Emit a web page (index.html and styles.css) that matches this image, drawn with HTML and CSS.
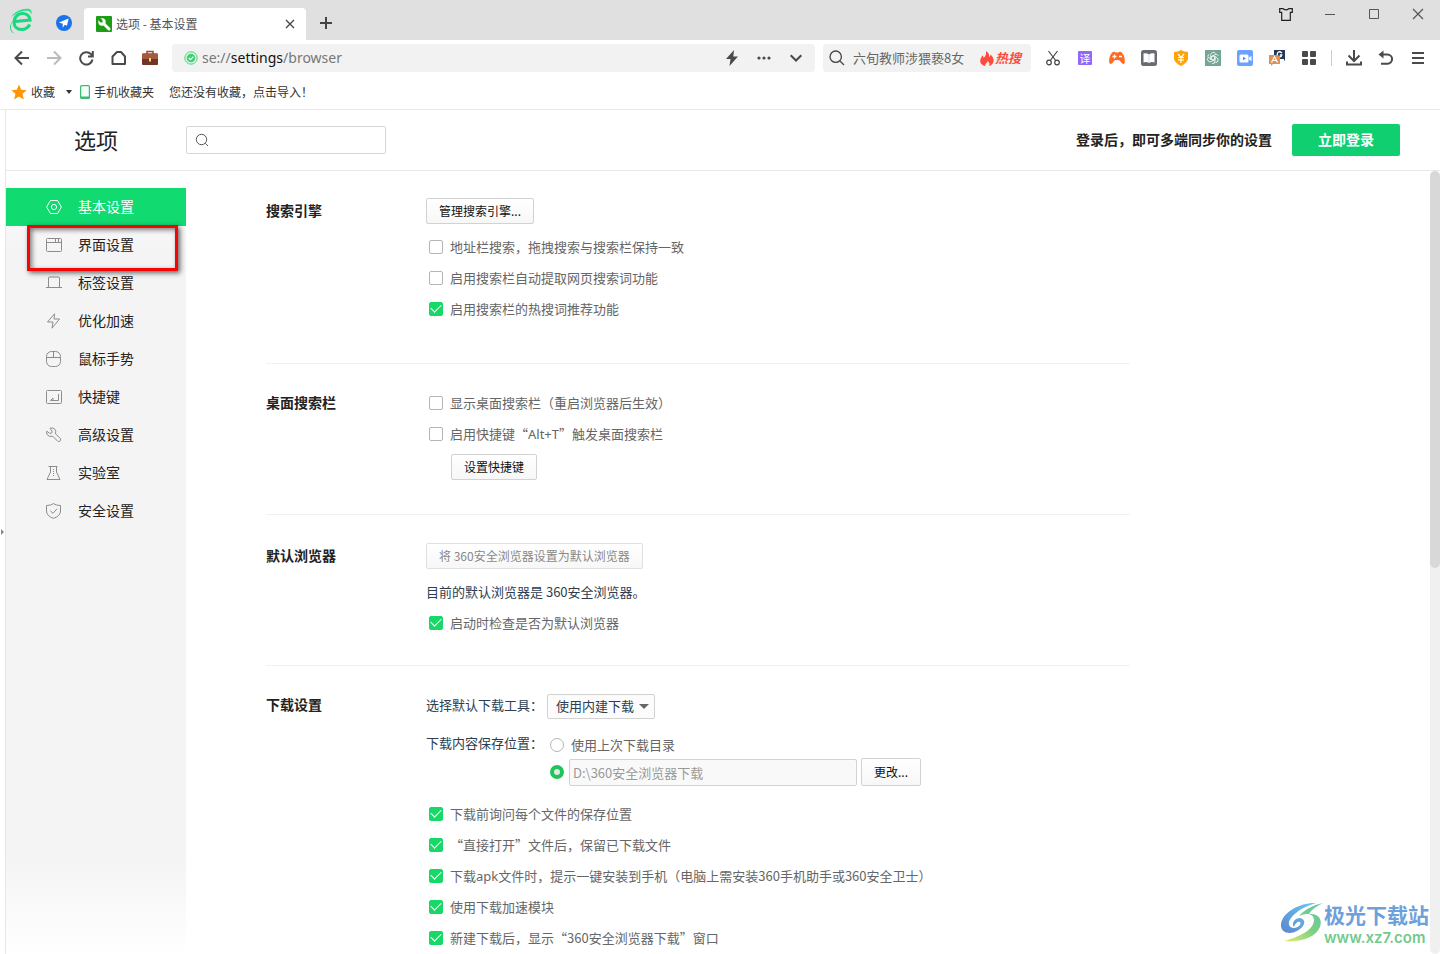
FILE: index.html
```html
<!DOCTYPE html>
<html lang="zh-CN">
<head>
<meta charset="utf-8">
<meta name="viewport" content="width=device-width, initial-scale=1">
<title>选项 - 基本设置</title>
<link rel="stylesheet" href="styles.css">
</head>
<body>
<header class="titlebar">
  <div class="brand">
    <svg width="24" height="26" viewBox="0 0 24 26"><path d="M5 13.500 20 12C19.500 8 16.500 5.500 12.500 5.500 7.500 5.500 4 9.500 4 14c0 4.500 3 7.500 7.500 7.500 3.500 0 6.500-1.700 8.300-5" fill="none" stroke="#1bd880" stroke-width="3.200"/><path d="M1 9.500C4 3.500 12 .500 18 .800c3.500.2 4.500 3 3 6 0-2.800-1.500-4-4-4C11 2.800 5.500 5.500 1 9.500z" fill="#2be08c"/><path d="M2.500 13C0 18 .5 23 4.500 25.500-.5 24-1.500 18 2.500 13z" fill="#1bd880"/></svg>
  </div>
  <svg class="nav-badge" width="16" height="16" viewBox="0 0 16 16"><circle cx="8" cy="8" r="8" fill="#1a73e8"/><path d="M12.600 3.500 3 7.600l3.700 1.200v4l2.100-3 2.200 1z" fill="#fff"/></svg>
  <div class="tab">
    <svg width="16" height="16" viewBox="0 0 16 16"><rect width="16" height="16" rx="1" fill="#1d9d16"/><path d="M6.500 6.500 13 13" stroke="#fff" stroke-width="3" stroke-linecap="round"/><circle cx="6" cy="6" r="3.700" fill="#fff"/><path d="M1.500 3 3.500 1.500 6.500 4 6.500 6.500 4.500 6.500z" fill="#1d9d16"/></svg>
    <span class="tab-title">选项 - 基本设置</span>
    <button class="bare" aria-label="关闭标签"><svg width="10" height="10" viewBox="0 0 10 10"><path d="m1 1 8 8M9 1 1 9" stroke="#444" stroke-width="1.300"/></svg></button>
  </div>
  <button class="bare new-tab" aria-label="新标签"><svg width="12" height="12" viewBox="0 0 12 12"><path d="M6 0v12M0 6h12" stroke="#444" stroke-width="2"/></svg></button>
  <div class="window-buttons">
    <button class="bare" aria-label="皮肤"><svg width="14" height="13" viewBox="0 0 14 13"><path d="M.7.700h3.500q2.800 2.400 5.600 0h3.500v3.600h-2v8H2.700v-8h-2z" fill="none" stroke="#222" stroke-width="1.200"/></svg></button>
    <button class="bare" aria-label="最小化"><svg width="12" height="12" viewBox="0 0 12 12"><path d="M1 6.500h10" stroke="#555"/></svg></button>
    <button class="bare" aria-label="最大化"><svg width="12" height="12" viewBox="0 0 12 12"><path d="M1.500 1.500h9v9h-9z" fill="none" stroke="#555"/></svg></button>
    <button class="bare" aria-label="关闭"><svg width="12" height="12" viewBox="0 0 12 12"><path d="m1 1 10 10M11 1 1 11" stroke="#555" stroke-width="1.200"/></svg></button>
  </div>
</header>

<div class="toolbar">
  <button class="tool" aria-label="后退"><svg width="16" height="16" viewBox="0 0 16 16"><path d="M15 8H2M8 1.500 1.500 8 8 14.500" class="line"/></svg></button>
  <button class="tool" aria-label="前进"><svg width="16" height="16" viewBox="0 0 16 16"><path d="M1 8h13M8 1.500 14.500 8 8 14.500" class="line faint"/></svg></button>
  <button class="tool" aria-label="刷新"><svg width="16" height="16" viewBox="0 0 16 16"><path d="M14.500 9.500A6.200 6.200 0 1 1 13 4.200L14.500 6M14.800 1v5.500H10" class="line"/></svg></button>
  <button class="tool" aria-label="主页"><svg width="16" height="16" viewBox="0 0 16 16"><path d="M2.500 14V6.500L7 2h4l4 4.500V14z" class="line" stroke-linejoin="round"/></svg></button>
  <button class="tool" aria-label="工具箱"><svg width="16" height="16" viewBox="0 0 16 16"><path d="M5 4V1.500h6V4" fill="none" stroke="#9a4a2e" stroke-width="1.500"/><rect y="3.500" width="16" height="11.500" rx="1" fill="#6f3526"/><path d="M0 4.500q0-1 1-1h14q1 0 1 1V9H0z" fill="#a7583d"/><rect x="7" y="8" width="2" height="3.500" fill="#ffd46b"/></svg></button>

  <div class="address">
    <svg width="14" height="14" viewBox="0 0 14 14"><circle cx="7" cy="7" r="6.200" fill="#dff7e6" stroke="#4fd47b"/><circle cx="7" cy="7" r="4.300" fill="#43ce70"/><path d="m4.800 7 1.700 1.700 2.900-3" fill="none" stroke="#fff" stroke-width="1.200"/></svg>
    <span class="url">se://<b>settings</b>/browser</span>
    <button class="tool" aria-label="极速模式"><svg width="12" height="16" viewBox="0 0 12 16"><path d="M8 0 0 9h4.500L3.500 16 12 6.500H7.300z" fill="#4a4a4a"/></svg></button>
    <button class="tool" aria-label="更多"><svg width="14" height="4" viewBox="0 0 14 4"><g fill="#4a4a4a"><circle cx="2" cy="2" r="1.600"/><circle cx="7" cy="2" r="1.600"/><circle cx="12" cy="2" r="1.600"/></g></svg></button>
    <button class="tool" aria-label="展开"><svg width="12" height="8" viewBox="0 0 12 8"><path d="m.7 1.200 5.300 5.300 5.300-5.300" class="line"/></svg></button>
  </div>

  <div class="quick-search">
    <svg width="16" height="16" viewBox="0 0 16 16"><circle cx="6.700" cy="6.700" r="5.700" fill="none" stroke="#444" stroke-width="1.300"/><path d="m11 11 4 4" stroke="#444" stroke-width="1.300"/></svg>
    <span class="query">六旬教师涉猥亵8女</span>
    <svg width="14" height="15" viewBox="0 0 14 15"><path d="M6 0c3 2 3.500 4 3 6 1-.5 1.500-1.500 1.700-2.500C13 6 14 8 13.500 10.500 13 13 11 14.500 9 15c1-2 .5-3.500-1.500-5C7.300 12 5 12.500 5.300 15 2.500 14.500 0 12.500.2 9.500.3 7 2 6 2.200 4.200 3.300 5 3.500 6 3.500 7 5.500 5.500 6.500 3 6 0z" fill="#ff4b3e"/></svg>
    <em class="hot">热搜</em>
  </div>

  <div class="extensions">
    <button class="tool" aria-label="截图"><svg width="14" height="16" viewBox="0 0 14 16"><g fill="none" stroke="#444" stroke-width="1.200"><path d="M2.500 1 9.700 10.500M11.500 1 4.300 10.500"/><circle cx="3" cy="12.500" r="2.300"/><circle cx="11" cy="12.500" r="2.300"/></g></svg></button>
    <button class="tool" aria-label="翻译"><span class="translate">译</span></button>
    <button class="tool" aria-label="游戏"><svg width="16" height="14" viewBox="0 0 16 14"><path d="M4 1C5.500.200 6 1.500 8 1.500S10.500.200 12 1c3 2 4 6.500 3.800 10-.1 2.500-2.300 2.500-3.600.5C11 9.500 10 9 8 9s-3 .5-4.200 2.500C2.500 13.500.300 13.500.200 11 0 7.500 1 3 4 1z" fill="#ff6a22"/><path d="M3.500 5.500h4M5.500 3.500v4M10 5.500h3" stroke="#fff" stroke-width="1.300"/></svg></button>
    <button class="tool" aria-label="阅读"><svg width="16" height="16" viewBox="0 0 16 16"><rect width="16" height="16" rx="2.500" fill="#696b73"/><path d="M2.500 3.500Q5.500 2.500 8 4.500 10.500 2.500 13.500 3.500v9Q10.500 11.500 8 13 5.500 11.500 2.500 12.500z" fill="#fff"/><path d="M8 4.500V13" stroke="#d9dadd"/></svg></button>
    <button class="tool" aria-label="优惠"><svg width="16" height="16" viewBox="0 0 16 16"><path d="M8 0q3 2 7 2v7q-1 4-7 7-6-3-7-7V2q4 0 7-2z" fill="#ffa408"/><path d="m5 4 3 3.500L11 4M5 7.500h6M5 9.800h6M8 7.500V13" fill="none" stroke="#fff" stroke-width="1.200"/></svg></button>
    <button class="tool" aria-label="智能助手"><svg width="16" height="16" viewBox="0 0 16 16"><rect width="16" height="16" fill="#74a696"/><g fill="none" stroke="#fff" stroke-width=".8"><path id="petal" d="M5.700 9.400V4.800a2.700 2.700 0 0 1 5-1.200M6 6.800l3.700-2.100a2.700 2.700 0 0 1 3.700 1.200"/><use href="#petal" transform="rotate(120 8 8)"/><use href="#petal" transform="rotate(240 8 8)"/><path d="m8 6 1.800 1v2L8 10 6.200 9V7z"/></g></svg></button>
    <button class="tool" aria-label="录屏"><svg width="16" height="16" viewBox="0 0 16 16"><rect width="16" height="16" rx="2" fill="#6ba2ff"/><rect x="2.500" y="4.500" width="9" height="8" rx="1.500" fill="#fff"/><path d="m12 7.500 2.500-1.500v5L12 9.500z" fill="#fff"/><path d="m6 6.700 3 1.800-3 1.800z" fill="#4388f7"/></svg></button>
    <button class="tool" aria-label="双语翻译"><svg width="16" height="16" viewBox="0 0 16 16"><path d="M5 0h11v10l-1 1V9H5z" fill="#233a56"/><path d="M13 3q-3-2.500-4.500 0-1 3.500 2 4 2 0 2.300-2h-2" fill="none" stroke="#fff" stroke-width="1.300"/><path d="M0 5h8l3 1v8H4l-2 2v-2H0z" fill="#df9352"/><path d="m2.500 12.500 3-6 3 6M3.700 10.500h3.600" fill="none" stroke="#fff" stroke-width="1.200"/></svg></button>
    <button class="tool" aria-label="应用"><svg width="14" height="14" viewBox="0 0 14 14"><g fill="#4a4a4a"><rect width="6" height="6" rx="1"/><rect x="8" width="6" height="6" rx="1"/><rect y="8" width="6" height="6" rx="1"/><rect x="8" y="8" width="6" height="6" rx="1"/></g></svg></button>
    <span class="divider"></span>
    <button class="tool" aria-label="下载"><svg width="16" height="16" viewBox="0 0 16 16"><path d="M8 0v11M2.500 5.500 8 11l5.500-5.500M1 11.500v3h14v-3" class="line"/></svg></button>
    <button class="tool" aria-label="撤销"><svg width="16" height="16" viewBox="0 0 16 16"><path d="M3 4.500h6.500a4.600 4.600 0 0 1 0 9.200H3" class="line"/><path d="M5.500.500v8L.500 4.500z" fill="#4a4a4a"/></svg></button>
    <button class="tool" aria-label="菜单"><svg width="12" height="14" viewBox="0 0 12 14"><path d="M0 2h12M0 7h12M0 12h12" class="line"/></svg></button>
  </div>
</div>

<nav class="bookmarks">
  <a class="mark" href="#fav"><svg width="16" height="16" viewBox="0 0 16 16"><path d="m8 .500 2.200 5.300 5.500.400-4.200 3.600 1.400 5.700L8 12.400l-4.900 3.100 1.400-5.700L.3 6.200l5.500-.4z" fill="#ff9500"/></svg>收藏<svg class="drop" width="6" height="4" viewBox="0 0 6 4"><path d="M0 0h6L3 4z" fill="#333"/></svg></a>
  <a class="mark phone" href="#mobile"><svg width="10" height="14" viewBox="0 0 10 14"><rect x=".6" y=".6" width="8.800" height="12.800" rx="1" fill="#f3fff8" stroke="#3dbb73" stroke-width="1.200"/><path d="M1 11.500h8V13H1z" fill="#3dbb73"/></svg>手机收藏夹</a>
  <a class="mark import" href="#import">您还没有收藏，点击导入！</a>
</nav>

<div class="page">
  <div class="gutter"><svg width="3" height="6" viewBox="0 0 3 6"><path d="M0 0v6l3-3z" fill="#888"/></svg></div>
  <div class="settings">
    <header class="settings-head">
      <h1>选项</h1>
      <label class="find"><svg width="14" height="14" viewBox="0 0 14 14"><circle cx="6.500" cy="6.500" r="5.200" fill="none" stroke="#555"/><path d="m10.300 10.300 2.700 2.700" stroke="#555"/></svg><input type="text" aria-label="搜索设置"></label>
      <strong class="sync">登录后，即可多端同步你的设置</strong>
      <button class="login">立即登录</button>
    </header>
    <div class="settings-body">
      <nav class="side">
        <a class="item active" href="#basic"><svg width="16" height="16" viewBox="0 0 16 16"><path d="M4.500 1.500h7L15.400 8l-3.900 6.500h-7L.6 8z"/><circle cx="8" cy="8" r="2.600"/></svg><span>基本设置</span></a>
        <a class="item" href="#ui"><svg width="16" height="16" viewBox="0 0 16 16"><rect x=".5" y="1.500" width="15" height="13" rx="1"/><path d="M.5 5.500h15M9.500 2v3M12.500 2v3"/></svg><span>界面设置</span></a>
        <a class="item" href="#tabs"><svg width="16" height="16" viewBox="0 0 16 16"><path d="M0 12.500h16M2.500 12V3q0-1 1-1h9q1 0 1 1v9"/></svg><span>标签设置</span></a>
        <a class="item" href="#speed"><svg width="16" height="16" viewBox="0 0 16 16"><path d="M8.500.800 1.500 9H7l-1 6.200L13.500 6H8z"/></svg><span>优化加速</span></a>
        <a class="item" href="#mouse"><svg width="16" height="16" viewBox="0 0 16 16"><rect x=".5" y=".5" width="14" height="15" rx="5"/><path d="M.5 6.500h14M7.500.500v6"/></svg><span>鼠标手势</span></a>
        <a class="item" href="#keys"><svg width="16" height="16" viewBox="0 0 16 16"><rect x=".5" y="1.500" width="15" height="13" rx="1"/><path d="M12.500 5v6.500h-8l2.500-2.500V11"/></svg><span>快捷键</span></a>
        <a class="item" href="#advanced"><svg width="16" height="16" viewBox="0 0 16 16"><path d="M4 1.200q3-1 4.800 1 1.500 2 .7 4.600l5 5q.7 1.500-.7 2.500-1 .6-2 0l-5-5Q3 10 1.500 8 .1 6 .8 4.200l3 2.300L6 5.700V4z"/></svg><span>高级设置</span></a>
        <a class="item" href="#labs"><svg width="16" height="16" viewBox="0 0 16 16"><path d="M2.500 1.500h9M4.500 1.500V7L1 14.500h13L10.500 7V1.500"/><path d="M7.500 4v8" stroke-dasharray="1 1"/></svg><span>实验室</span></a>
        <a class="item" href="#security"><svg width="16" height="16" viewBox="0 0 16 16"><path d="M7.500.600Q10 2.500 14.500 2.500V8q0 5-7 7.400Q.5 13 .5 8V2.500Q5 2.500 7.500.600zM4.300 7.800 7 10.300l4-4.500"/></svg><span>安全设置</span></a>
        <span class="highlight"></span>
      </nav>

      <main class="content">
        <section class="group">
          <h2>搜索引擎</h2>
          <div class="options">
            <button class="btn">管理搜索引擎...</button>
            <div class="rows">
              <label class="check"><input type="checkbox">地址栏搜索，拖拽搜索与搜索栏保持一致</label>
              <label class="check"><input type="checkbox">启用搜索栏自动提取网页搜索词功能</label>
              <label class="check"><input type="checkbox" checked>启用搜索栏的热搜词推荐功能</label>
            </div>
          </div>
        </section>
        <section class="group desktop">
          <h2>桌面搜索栏</h2>
          <div class="options">
            <label class="check"><input type="checkbox">显示桌面搜索栏（重启浏览器后生效）</label>
            <label class="check"><input type="checkbox"><span>启用快捷键“<span class="latin">Alt+T</span>”触发桌面搜索栏</span></label>
            <button class="btn nested">设置快捷键</button>
          </div>
        </section>
        <section class="group default">
          <h2>默认浏览器</h2>
          <div class="options">
            <button class="btn" disabled>将 360安全浏览器设置为默认浏览器</button>
            <div class="rows">
              <p class="note">目前的默认浏览器是 360安全浏览器。</p>
              <label class="check"><input type="checkbox" checked>启动时检查是否为默认浏览器</label>
            </div>
          </div>
        </section>
        <section class="group downloads">
          <h2>下载设置</h2>
          <div class="options">
            <div class="field">
              <label class="caption" for="tool">选择默认下载工具：</label>
              <span class="picker"><select id="tool"><option>使用内建下载</option></select></span>
            </div>
            <div class="field place">
              <span class="caption" id="place">下载内容保存位置：</span>
              <div role="radiogroup" aria-labelledby="place">
                <label class="radio"><input type="radio" name="place">使用上次下载目录</label>
                <div class="radio">
                  <input type="radio" name="place" aria-label="指定目录" checked>
                  <input class="path" type="text" aria-label="下载目录" value="D:\360安全浏览器下载" disabled>
                  <button class="btn change">更改...</button>
                </div>
              </div>
            </div>
            <div class="rows last">
              <label class="check"><input type="checkbox" checked>下载前询问每个文件的保存位置</label>
              <label class="check"><input type="checkbox" checked>“直接打开”文件后，保留已下载文件</label>
              <label class="check"><input type="checkbox" checked><span>下载<span class="latin">apk</span>文件时，提示一键安装到手机（电脑上需安装360手机助手或360安全卫士）</span></label>
              <label class="check"><input type="checkbox" checked>使用下载加速模块</label>
              <label class="check"><input type="checkbox" checked>新建下载后，显示“360安全浏览器下载”窗口</label>
            </div>
          </div>
        </section>
      </main>
      <div class="scroll"><div class="thumb"></div></div>
    </div>
  </div>
</div>

<aside class="watermark">
  <svg width="44" height="42" viewBox="0 0 44 42"><defs><linearGradient id="sky" x1="0" y1="1" x2="1" y2="0"><stop offset="0" stop-color="#5b84cf"/><stop offset="1" stop-color="#69cdf2"/></linearGradient><linearGradient id="leaf" x1="0" y1="1" x2="1" y2="0"><stop offset="0" stop-color="#e6ec6c"/><stop offset=".5" stop-color="#7bcf84"/><stop offset="1" stop-color="#62c4b0"/></linearGradient></defs><path d="M36 1C22 0 3 9 1 22c-1 9 9 11 16 7 8-4 10-12 3-13-5 0-9 5-6 9 1-4 4-6 6-5 2 2-2 6-6 6-5 0-7-5-3-10C16 9 26 4 36 1z" fill="url(#sky)"/><path d="M43 1C33 3 24 8 19 14c8-4 15-2 15 4 0 10-15 17-30 21 16 2 32-4 36-14 3-8-2-14-11-13 3-5 8-8 14-11z" fill="url(#leaf)"/></svg>
  <div><div class="wm-name">极光下载站</div><div class="wm-url">www.xz7.com</div></div>
</aside>
</body>
</html>
```
FILE: styles.css
```css
* { box-sizing: border-box; }
body {
  margin: 0;
  height: 100vh;
  display: flex;
  flex-direction: column;
  overflow: hidden;
  position: relative;
  background: #fff;
  color: #222;
  font: 13px/20px "Noto Sans CJK SC", sans-serif;
}
button, input, select { font-family: inherit; margin: 0; }
a { color: inherit; text-decoration: none; }
svg { display: block; flex: none; }
.latin { font-family: "Noto Sans", sans-serif; }
.line { fill: none; stroke: #4a4a4a; stroke-width: 2; }
.faint { stroke: #bbb; }
.bare, .tool {
  border: 0;
  padding: 0;
  background: none;
  display: flex;
  align-items: center;
  justify-content: center;
}

.titlebar { flex: none; height: 40px; display: flex; background: #e0e0e0; }
.brand { padding: 8px 0 0 10px; width: 56px; }
.nav-badge { margin: 15px 12px 0 0; }
.tab {
  width: 222px;
  margin-top: 8px;
  padding: 0 11px 0 12px;
  display: flex;
  align-items: center;
  gap: 4px;
  background: #fff;
  border-radius: 4px 4px 0 0;
}
.tab-title { flex: 1; font-size: 12px; color: #555; }
.new-tab { width: 40px; padding-top: 6px; }
.window-buttons { margin-left: auto; display: flex; height: 28px; }
.window-buttons .bare { width: 44px; }

.toolbar { flex: none; display: flex; align-items: center; padding: 4px 6px; }
.tool { width: 32px; height: 28px; flex: none; }
.address {
  flex: 1;
  min-width: 0;
  height: 28px;
  margin-left: 6px;
  padding: 0 3px 0 12px;
  display: flex;
  align-items: center;
  background: #f2f2f2;
  border-radius: 4px;
}
.url { flex: 1; margin-left: 4px; color: #777; font-family: "Noto Sans", sans-serif; font-size: 14px; }
.url b { font-weight: 400; color: #111; }
.quick-search {
  width: 208px;
  height: 28px;
  margin: 0 6px 0 8px;
  padding: 0 10px 0 6px;
  display: flex;
  align-items: center;
  background: #f2f2f2;
  border-radius: 4px;
}
.query { flex: 1; margin-left: 8px; color: #666; white-space: nowrap; }
.hot { margin-left: 1px; color: #ff4b3e; font-weight: 700; }
.extensions { display: flex; align-items: center; }
.translate { width: 14px; height: 14px; background: #9168f5; color: #fff; font-size: 11px; line-height: 14px; border-radius: 1px; }
.divider { width: 1px; height: 16px; margin: 0 6px; background: #ccc; }

.bookmarks {
  flex: none;
  height: 34px;
  display: flex;
  align-items: center;
  padding: 0 11px 1px;
  border-bottom: 1px solid #ebebeb;
  font-size: 12px;
  color: #333;
}
.mark { display: flex; align-items: center; gap: 4px; }
.drop { margin-left: 7px; }
.phone { margin-left: 8px; }
.import { margin-left: 15px; }

.page { flex: 1; min-height: 0; display: flex; }
.gutter { flex: none; width: 6px; border-right: 1px solid #e6e6e6; display: flex; align-items: center; padding-left: 1px; }
.settings { flex: 1; min-width: 0; display: flex; flex-direction: column; }
.settings-head { flex: none; height: 61px; display: flex; align-items: center; padding: 0 40px 0 68px; border-bottom: 1px solid #e8e8e8; }
h1 { width: 112px; margin: 0; padding-bottom: 2px; font-size: 22px; line-height: 32px; font-weight: 400; }
.find { width: 200px; height: 28px; display: flex; align-items: center; padding-left: 8px; border: 1px solid #d6d6d6; border-radius: 2px; }
.find input { flex: 1; min-width: 0; border: 0; outline: 0; background: none; }
.sync { margin-left: auto; padding-bottom: 2px; font-size: 14px; }
.login { width: 108px; height: 32px; margin-left: 20px; padding-bottom: 3px; border: 0; border-radius: 2px; background: #10cf70; color: #fff; font-size: 14px; font-weight: 700; }

.settings-body { flex: 1; min-height: 0; display: flex; position: relative; overflow: hidden; }
.side {
  flex: none;
  position: relative;
  width: 180px;
  padding-top: 17px;
  background: linear-gradient(#fff, #f4f4f4 80px, #f4f4f4 calc(100% - 100px), #fff);
}
.item { display: flex; align-items: center; gap: 16px; height: 38px; padding-left: 40px; font-size: 14px; }
.item span { padding-bottom: 2px; }
.item svg { fill: none; stroke: #8c8c8c; }
.active { background: #11da70; color: #fff; }
.item.active svg { stroke: #fff; }
.highlight {
  position: absolute;
  left: 21px;
  top: 54px;
  width: 151px;
  height: 46px;
  border: 3px solid #f50505;
  box-shadow: 2px 2px 5px rgba(0, 0, 0, .6), inset 2px 2px 5px rgba(0, 0, 0, .5);
}

.content { flex: 1; min-width: 0; padding: 0 80px; }
.group { display: flex; max-width: 864px; padding: 27px 0 39px; border-bottom: 1px solid #f0f0f0; }
.group h2 { flex: none; width: 160px; margin: 2px 0 0; font-size: 14px; line-height: 20px; font-weight: 700; }
.options { flex: 1; min-width: 0; }
.desktop { padding: 23px 0 34px; }
.group.desktop h2 { margin-top: 5px; }
.default { padding: 28px 0 27px; }
.downloads { padding: 28px 0; border-bottom: 0; }
.group.downloads h2 { margin-top: 0; }
.btn {
  display: block;
  height: 26px;
  padding: 0 12px;
  border: 1px solid #d2d2d2;
  border-radius: 2px;
  background: linear-gradient(#fff, #f7f7f7);
  color: #111;
  font-size: 12px;
  line-height: 20px;
}
.btn:disabled { color: #888; border-color: #e0e0e0; }
.nested { margin: 5px 0 0 25px; }
.rows { margin-top: 7px; }
.check { display: flex; align-items: center; height: 31px; padding-left: 3px; gap: 7px; color: #666; white-space: nowrap; }
.check input {
  appearance: none;
  flex: none;
  display: grid;
  place-items: center;
  width: 14px;
  height: 14px;
  border: 1px solid #b5b5b5;
  border-radius: 2px;
  background: #fff;
}
.check input:checked { border-color: #18d968; background: #18d968; }
.check input:checked::before { content: ""; width: 9px; height: 5px; margin-bottom: 3px; border: solid #fff; border-width: 0 0 1px 1px; rotate: -45deg; }
.note { margin: 0; line-height: 31px; color: #2c3e50; }
.field { display: flex; color: #2c3e50; }
.caption { flex: none; width: 121px; line-height: 22px; white-space: nowrap; }
.picker { position: relative; }
.picker::after { content: ""; position: absolute; right: 6px; top: 10px; border: 5px solid transparent; border-top-color: #666; border-bottom: 0; pointer-events: none; }
select { appearance: none; display: block; width: 108px; height: 25px; padding: 0 8px 2px; border: 1px solid #d2d2d2; border-radius: 2px; background: #fcfcfc; color: #2c3e50; font-size: 13px; }
.place { margin-top: 12px; }
.place .caption { line-height: 24px; }
.radio { display: flex; align-items: center; height: 27px; padding-left: 3px; color: #666; }
.radio + .radio { height: 28px; }
label.radio { gap: 7px; }
.radio input[type="radio"] { appearance: none; flex: none; width: 14px; height: 14px; border: 1px solid #b5b5b5; border-radius: 50%; background: #fff; }
.radio input[type="radio"]:checked { border: 4px solid #1fc45b; background: #e6e6e6; }
.path { width: 288px; height: 27px; margin: 0 4px 0 5px; padding: 0 3px; border: 1px solid #d2d2d2; border-radius: 2px; background: #f9f9f9; color: #999; font-size: 13px; }
.change { height: 28px; width: 60px; }
.last { margin-top: 12px; }
.scroll { position: absolute; right: 0; top: 0; bottom: 0; width: 10px; background: #f0f0f0; border-radius: 5px; }
.thumb { height: 397px; border-radius: 5px; background: #d8d8d8; }

.watermark { position: absolute; right: 11px; bottom: 7px; display: flex; align-items: center; }
.wm-name { color: #6ea0da; font-size: 21px; line-height: 30px; font-weight: 700; }
.wm-url { color: #72c98d; font: 600 15px/18px Inter, sans-serif; }
```
